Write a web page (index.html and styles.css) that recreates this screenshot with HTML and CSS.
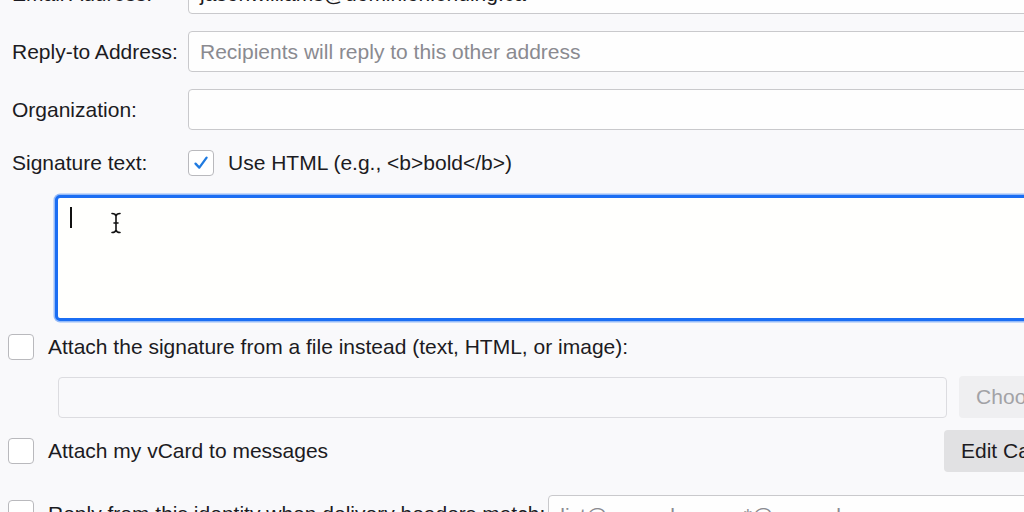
FILE: index.html
```html
<!DOCTYPE html>
<html>
<head>
<meta charset="utf-8">
<link rel="stylesheet" href="styles.css">
</head>
<body>
<div class="page">
  <div class="form-grid">
    <label class="field-label">Email Address:</label>
    <div class="text-input">jasonwilliams@dominionlending.ca</div>
    <label class="field-label">Reply-to Address:</label>
    <div class="text-input placeholder">Recipients will reply to this other address</div>
    <label class="field-label">Organization:</label>
    <div class="text-input"></div>
    <label class="field-label sig-label">Signature text:</label>
    <div class="check-inline">
      <span class="checkbox checked">
        <svg width="26" height="26" viewBox="0 0 26 26"><path d="M7.5 13.6 L11.3 17.6 L18.6 7.6" fill="none" stroke="#1f7ae0" stroke-width="2.3" stroke-linecap="round" stroke-linejoin="round"/></svg>
      </span>
      <span class="check-text">Use HTML (e.g., &lt;b&gt;bold&lt;/b&gt;)</span>
    </div>
  </div>

  <div class="sig-box">
    <span class="caret"></span>
    <svg class="ibeam" width="12" height="22" viewBox="0 0 12 22"><path d="M2 1.5 Q5.5 1.5 6 4 Q6.5 1.5 10 1.5 M6 4 V18 M2 20.5 Q5.5 20.5 6 18 Q6.5 20.5 10 20.5 M4 11 H8" fill="none" stroke="#111" stroke-width="1.6" stroke-linecap="round"/></svg>
  </div>

  <div class="check-row attach-row">
    <span class="checkbox"></span>
    <span class="check-text">Attach the signature from a file instead (text, HTML, or image):</span>
  </div>

  <div class="file-row">
    <div class="file-input"></div>
    <div class="button disabled">Choose...</div>
  </div>

  <div class="check-row vcard-row">
    <span class="checkbox"></span>
    <span class="check-text">Attach my vCard to messages</span>
    <div class="button">Edit Card...</div>
  </div>

  <div class="check-row reply-row">
    <span class="checkbox"></span>
    <span class="check-text">Reply from this identity when delivery headers match:</span>
    <div class="text-input placeholder reply-input">list@example.com, *@example.com</div>
  </div>
</div>
</body>
</html>
```
FILE: styles.css
```css
html, body {
  margin: 0;
  padding: 0;
  background: #f9f9fb;
  overflow: hidden;
}
body {
  width: 1024px;
  height: 512px;
  font-family: "Liberation Sans", Arial, sans-serif;
  font-size: 21px;
  color: #1c1b22;
}
.page {
  width: 1083px;
  margin-top: -27px;
}
.form-grid {
  display: grid;
  grid-template-columns: 188px 1fr;
  grid-template-rows: 41px 41px 41px 32px;
  row-gap: 17px;
}
.field-label {
  padding-left: 12px;
  display: flex;
  align-items: center;
  white-space: nowrap;
}
.text-input {
  box-sizing: border-box;
  height: 41px;
  background: #fefefe;
  border: 1px solid #c9c9cc;
  border-radius: 4px;
  padding: 0 11px;
  display: flex;
  align-items: center;
  white-space: nowrap;
  overflow: hidden;
}
.placeholder {
  color: #8a8a90;
}
.check-inline {
  display: flex;
  align-items: center;
  height: 32px;
  gap: 14px;
}
.checkbox {
  box-sizing: border-box;
  flex: none;
  width: 26px;
  height: 26px;
  border: 1px solid #b9b9bd;
  border-radius: 4px;
  background: #ffffff;
  display: block;
  position: relative;
}
.checkbox svg {
  position: absolute;
  left: -1px;
  top: -1px;
}
.check-text {
  white-space: nowrap;
}
.sig-box {
  position: relative;
  box-sizing: border-box;
  margin-top: 16px;
  margin-left: 55px;
  height: 126px;
  background: #fffffd;
  border: 3px solid #1b6ef3;
  border-radius: 5px;
  box-shadow: 0 0 0 1.5px rgba(27, 110, 243, 0.45);
  padding: 9px 12px;
}
.caret {
  display: block;
  width: 1.5px;
  height: 21px;
  background: #111;
}
.ibeam {
  position: absolute;
  left: 52px;
  top: 14px;
}
.check-row {
  display: flex;
  align-items: center;
  gap: 14px;
  padding-left: 8px;
}
.attach-row {
  margin-top: 13px;
  height: 26px;
}
.file-row {
  margin-top: 16px;
  display: flex;
  align-items: center;
  gap: 12px;
  padding-left: 58px;
}
.file-input {
  box-sizing: border-box;
  width: 889px;
  height: 41px;
  background: #f9f9fb;
  border: 1px solid #dcdce0;
  border-radius: 4px;
}
.button {
  box-sizing: border-box;
  height: 42px;
  padding: 0 17px;
  border-radius: 4px;
  background: #e1e1e3;
  display: flex;
  align-items: center;
  white-space: nowrap;
  flex: none;
  margin-left: auto;
}
.button.disabled {
  background: #efeff1;
  color: #a2a2a6;
}
.vcard-row {
  margin-top: 12px;
  height: 42px;
}
.reply-row {
  margin-top: 23px;
  height: 41px;
  align-items: flex-start;
}
.reply-row .checkbox {
  margin-top: 5px;
}
.reply-row .check-text {
  line-height: 38px;
}
.reply-input {
  flex: 1;
  margin-left: -11px;
}
```
